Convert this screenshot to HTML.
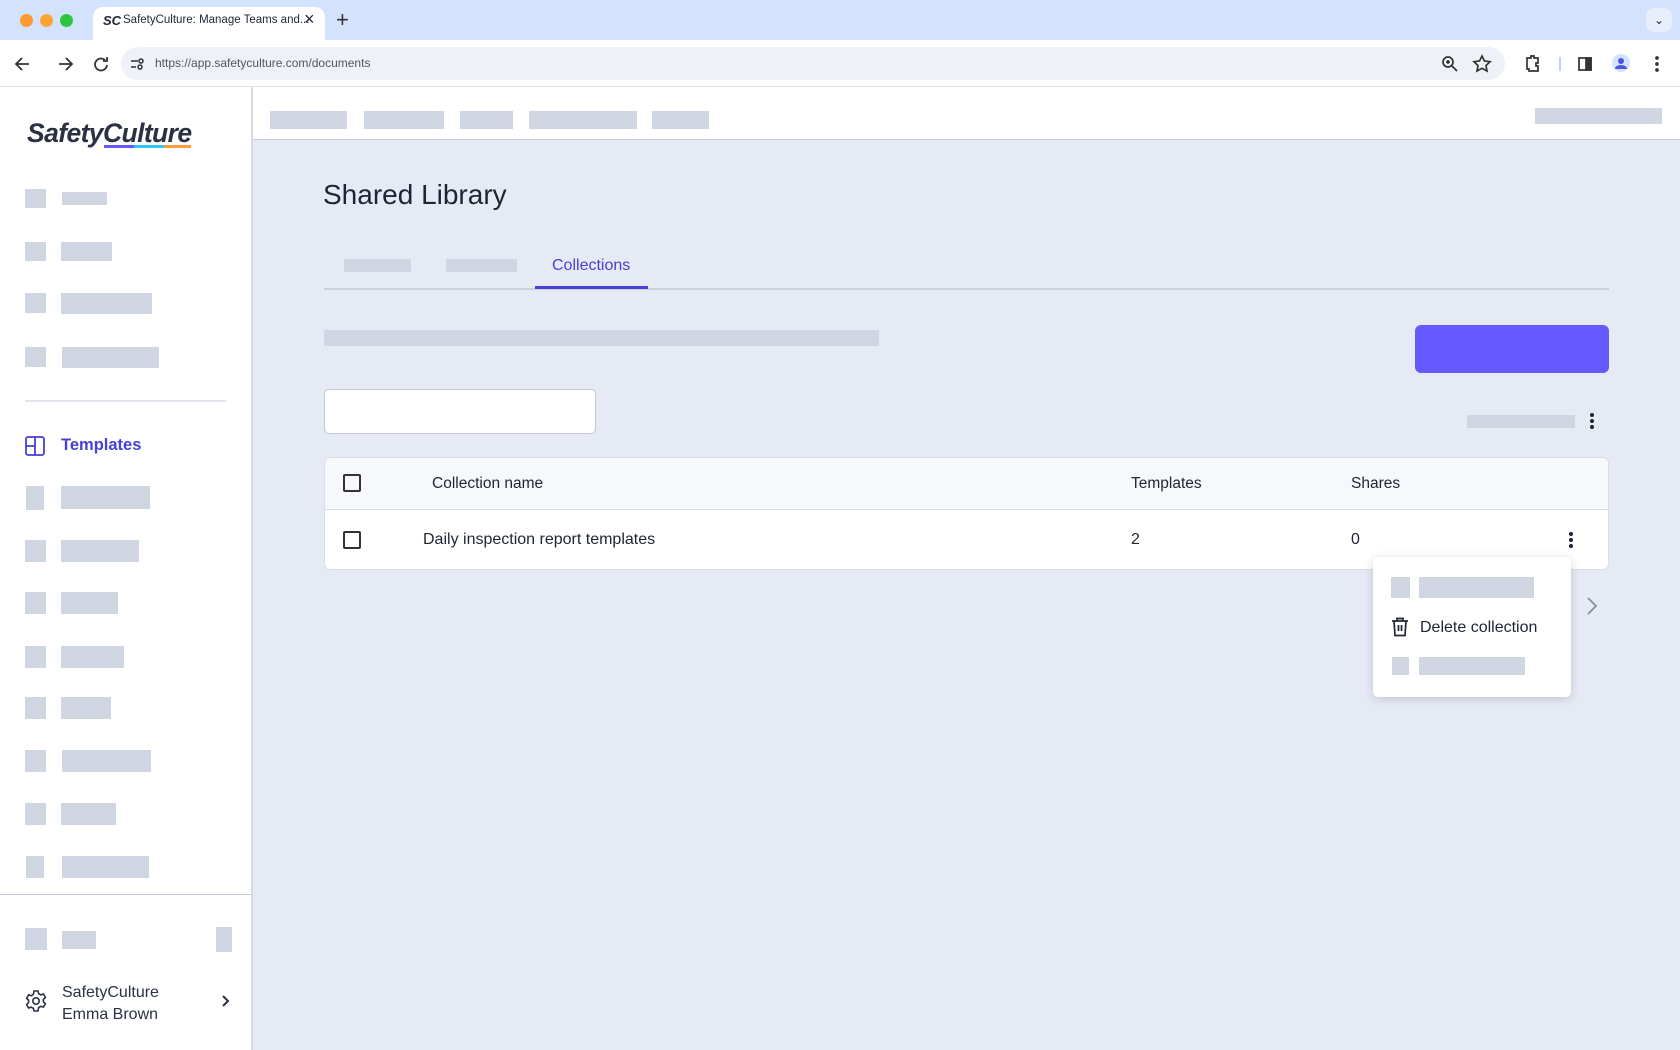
<!DOCTYPE html>
<html><head><meta charset="utf-8"><style>
*{margin:0;padding:0;box-sizing:border-box}
body{width:1680px;height:1050px;overflow:hidden;font-family:"Liberation Sans",sans-serif;background:#e6eaf5;position:relative;color:#1f2533}
.a{position:absolute}
.sk{position:absolute;background:#d0d6e1}
</style></head><body>
<!-- browser chrome -->
<div class="a" style="left:0;top:0;width:1680px;height:41px;background:#d3e3fd"></div>
<div class="a" style="left:20px;top:14px;width:13px;height:13px;border-radius:50%;background:#fd9a32"></div>
<div class="a" style="left:40px;top:14px;width:13px;height:13px;border-radius:50%;background:#fda432"></div>
<div class="a" style="left:60px;top:14px;width:13px;height:13px;border-radius:50%;background:#2ec640"></div>
<div class="a" style="left:93px;top:7px;width:232px;height:36px;background:#fff;border-radius:10px 10px 0 0"></div>
<div class="a" style="left:103px;top:13px;font:italic bold 13px 'Liberation Sans';color:#1f2533">SC</div>
<div class="a" style="left:123px;top:14px;font-size:11.5px;color:#1f2533">SafetyCulture: Manage Teams and...</div>
<div class="a" style="left:304px;top:9px;font-size:18px;color:#1f2533">×</div>
<div class="a" style="left:336px;top:7px;font-size:22px;color:#333">+</div>
<div class="a" style="left:1646px;top:8px;width:26px;height:24px;background:#e8eefb;border-radius:8px;font-size:12px;text-align:center;line-height:24px">⌄</div>
<div class="a" style="left:0;top:40px;width:1680px;height:47px;background:#fff;border-bottom:1px solid #dde0e6"></div>
<svg class="a" style="left:12px;top:54px" width="100" height="20" viewBox="0 0 100 20" fill="none" stroke="#333" stroke-width="1.8"><path d="M17 10H5M10 4L4 10l6 6"/><path d="M47 10h12M54 4l6 6-6 6"/><path d="M93 6a6 6 0 1 0 2 5M95 3v4h-4"/></svg>
<div class="a" style="left:121px;top:47px;width:1384px;height:33px;background:#eef1f8;border-radius:17px"></div>
<svg class="a" style="left:129px;top:56px" width="16" height="16" viewBox="0 0 16 16" fill="none" stroke="#333" stroke-width="1.5"><path d="M2 5h7M2 11h5"/><circle cx="12" cy="5" r="2"/><circle cx="11" cy="11" r="2"/></svg>
<div class="a" style="left:155px;top:56px;font-size:12px;color:#555">https://app.safetyculture.com/documents</div>
<svg class="a" style="left:1440px;top:54px" width="220" height="20" viewBox="0 0 220 20" fill="none" stroke="#333" stroke-width="1.7"><circle cx="8" cy="8" r="5"/><path d="M12 12l5 5M6 8h4M8 6v4"/><path d="M42 2l2.5 5 5.5.7-4 3.8 1 5.5-5-2.7-5 2.7 1-5.5-4-3.8 5.5-.7z"/><path d="M87 4h4v-2h3v2h4v5h-2v3h2v5h-9v-2h-2z"/><path d="M120 3v14" stroke="#bcd"/><rect x="139" y="4" width="12" height="12"/><rect x="146" y="4" width="5" height="12" fill="#333"/><circle cx="181" cy="9" r="9" fill="#d3e3fd" stroke="none"/><circle cx="181" cy="7" r="3" fill="#4f55d9" stroke="none"/><path d="M175 15a6 4 0 0 1 12 0z" fill="#4f55d9" stroke="none"/><circle cx="217" cy="4" r="1" fill="#333"/><circle cx="217" cy="10" r="1" fill="#333"/><circle cx="217" cy="16" r="1" fill="#333"/></svg>

<!-- sidebar -->
<div class="a" style="left:0;top:87px;width:253px;height:963px;background:#fff;border-right:2px solid #d6dae3"></div>
<div class="a" style="left:27px;top:118px;font:italic bold 26.5px 'Liberation Sans';color:#2a3142;letter-spacing:-0.6px">SafetyCulture</div>
<div class="a" style="left:104px;top:145px;width:30px;height:3px;background:#6559ff"></div>
<div class="a" style="left:134px;top:145px;width:30px;height:3px;background:#2fc6f5"></div>
<div class="a" style="left:164px;top:145px;width:27px;height:3px;background:#ff9b3d"></div>

<div class="sk" style="left:25px;top:189px;width:21px;height:19px"></div><div class="sk" style="left:62px;top:192px;width:45px;height:13px"></div>
<div class="sk" style="left:25px;top:242px;width:21px;height:19px"></div><div class="sk" style="left:61px;top:242px;width:51px;height:19px"></div>
<div class="sk" style="left:25px;top:293px;width:21px;height:20px"></div><div class="sk" style="left:61px;top:293px;width:91px;height:21px"></div>
<div class="sk" style="left:25px;top:347px;width:21px;height:20px"></div><div class="sk" style="left:62px;top:347px;width:97px;height:21px"></div>
<div class="a" style="left:25px;top:400px;width:201px;height:2px;background:#e3e5ec"></div>
<svg class="a" style="left:25px;top:436px" width="20" height="20" viewBox="0 0 20 20" fill="none" stroke="#4740d4" stroke-width="1.8"><rect x="1" y="1" width="18" height="18" rx="2"/><path d="M10 1v18M1 10h9"/></svg>
<div class="a" style="left:61px;top:436px;font-size:16.5px;font-weight:bold;color:#4740d4">Templates</div>
<div class="sk" style="left:26px;top:486px;width:18px;height:24px"></div><div class="sk" style="left:61px;top:486px;width:89px;height:23px"></div>
<div class="sk" style="left:25px;top:540px;width:21px;height:22px"></div><div class="sk" style="left:61px;top:540px;width:78px;height:22px"></div>
<div class="sk" style="left:25px;top:592px;width:21px;height:22px"></div><div class="sk" style="left:61px;top:592px;width:57px;height:22px"></div>
<div class="sk" style="left:25px;top:646px;width:21px;height:22px"></div><div class="sk" style="left:61px;top:646px;width:63px;height:22px"></div>
<div class="sk" style="left:25px;top:697px;width:21px;height:22px"></div><div class="sk" style="left:61px;top:697px;width:50px;height:22px"></div>
<div class="sk" style="left:25px;top:750px;width:21px;height:22px"></div><div class="sk" style="left:62px;top:750px;width:89px;height:22px"></div>
<div class="sk" style="left:25px;top:803px;width:21px;height:22px"></div><div class="sk" style="left:61px;top:803px;width:55px;height:22px"></div>
<div class="sk" style="left:26px;top:856px;width:18px;height:22px"></div><div class="sk" style="left:62px;top:856px;width:87px;height:22px"></div>
<div class="a" style="left:0;top:894px;width:252px;height:1px;background:#c5cad6"></div>
<div class="sk" style="left:25px;top:928px;width:22px;height:22px"></div><div class="sk" style="left:62px;top:931px;width:34px;height:18px"></div>
<div class="sk" style="left:216px;top:927px;width:16px;height:25px"></div>
<svg class="a" style="left:24px;top:989px" width="24" height="24" viewBox="0 0 24 24" fill="none" stroke="#2a3142" stroke-width="1.6"><circle cx="12" cy="12" r="3.2"/><path d="M10 2h4l.6 2.6 2.3 1.3 2.5-.9 2 3.5-2 1.8v2.6l2 1.8-2 3.5-2.5-.9-2.3 1.3L14 22h-4l-.6-2.6-2.3-1.3-2.5.9-2-3.5 2-1.8v-2.6l-2-1.8 2-3.5 2.5.9 2.3-1.3z"/></svg>
<div class="a" style="left:62px;top:982px;font-size:16px;color:#2a3142;line-height:22px">SafetyCulture<br>Emma Brown</div>
<svg class="a" style="left:221px;top:994px" width="10" height="14" viewBox="0 0 10 14" fill="none" stroke="#2a3142" stroke-width="2"><path d="M2 2l5 5-5 5"/></svg>

<!-- main header -->
<div class="a" style="left:253px;top:87px;width:1427px;height:53px;background:#fff;border-bottom:1px solid #c5cad6"></div>
<div class="sk" style="left:270px;top:111px;width:77px;height:18px"></div>
<div class="sk" style="left:364px;top:111px;width:80px;height:18px"></div>
<div class="sk" style="left:460px;top:111px;width:53px;height:18px"></div>
<div class="sk" style="left:529px;top:111px;width:108px;height:18px"></div>
<div class="sk" style="left:652px;top:111px;width:57px;height:18px"></div>
<div class="sk" style="left:1535px;top:108px;width:127px;height:16px"></div>

<div class="a" style="left:323px;top:179px;font-size:28px;color:#1f2533">Shared Library</div>
<div class="sk" style="left:344px;top:259px;width:67px;height:13px"></div>
<div class="sk" style="left:446px;top:259px;width:71px;height:13px"></div>
<div class="a" style="left:552px;top:257px;font-size:16px;color:#4740d4">Collections</div>
<div class="a" style="left:324px;top:288px;width:1285px;height:2px;background:#cdd2dd"></div>
<div class="a" style="left:535px;top:286px;width:113px;height:3px;background:#4740d4"></div>

<div class="sk" style="left:324px;top:330px;width:555px;height:16px"></div>
<div class="a" style="left:1415px;top:325px;width:194px;height:48px;background:#6559ff;border-radius:6px"></div>
<div class="a" style="left:324px;top:389px;width:272px;height:45px;background:#fff;border:1px solid #c3c8d4;border-radius:5px"></div>
<div class="sk" style="left:1467px;top:415px;width:108px;height:13px"></div>
<svg class="a" style="left:1588px;top:412px" width="8" height="18" viewBox="0 0 8 18" fill="#1f2533"><circle cx="4" cy="3" r="2"/><circle cx="4" cy="9" r="2"/><circle cx="4" cy="15" r="2"/></svg>

<!-- table -->
<div class="a" style="left:324px;top:457px;width:1285px;height:113px;background:#fff;border:1px solid #d9dde6;border-radius:6px;overflow:hidden">
 <div style="height:52px;background:#f7f8fb;border-bottom:1px solid #d9dde6"></div>
</div>
<div class="a" style="left:343px;top:474px;width:18px;height:18px;border:2px solid #333;border-radius:2px"></div>
<div class="a" style="left:432px;top:475px;font-size:15.5px;color:#1f2533">Collection name</div>
<div class="a" style="left:1131px;top:475px;font-size:15.5px;color:#1f2533">Templates</div>
<div class="a" style="left:1351px;top:475px;font-size:15.5px;color:#1f2533">Shares</div>
<div class="a" style="left:343px;top:531px;width:18px;height:18px;border:2px solid #333;border-radius:2px"></div>
<div class="a" style="left:423px;top:531px;font-size:16px;color:#1f2533">Daily inspection report templates</div>
<div class="a" style="left:1131px;top:531px;font-size:16px;color:#1f2533">2</div>
<div class="a" style="left:1351px;top:531px;font-size:16px;color:#1f2533">0</div>
<svg class="a" style="left:1567px;top:531px" width="8" height="18" viewBox="0 0 8 18" fill="#1f2533"><circle cx="4" cy="3" r="2"/><circle cx="4" cy="9" r="2"/><circle cx="4" cy="15" r="2"/></svg>
<svg class="a" style="left:1586px;top:597px" width="12" height="18" viewBox="0 0 12 18" fill="none" stroke="#8a8f9c" stroke-width="1.8"><path d="M2 1l8 8-8 8"/></svg>

<!-- menu -->
<div class="a" style="left:1373px;top:557px;width:198px;height:140px;background:#fff;border-radius:5px;box-shadow:0 2px 10px rgba(30,40,70,.18)"></div>
<div class="sk" style="left:1391px;top:577px;width:19px;height:21px"></div>
<div class="sk" style="left:1419px;top:577px;width:115px;height:21px"></div>
<svg class="a" style="left:1391px;top:617px" width="18" height="20" viewBox="0 0 18 20" fill="none" stroke="#1f2533" stroke-width="1.7"><path d="M1 4h16M6 4V1.5h6V4M3 4l1 14.5h10L15 4M7.5 8v6M10.5 8v6"/></svg>
<div class="a" style="left:1420px;top:619px;font-size:16px;color:#1f2533">Delete collection</div>
<div class="sk" style="left:1392px;top:657px;width:17px;height:18px"></div>
<div class="sk" style="left:1419px;top:657px;width:106px;height:18px"></div>
</body></html>
